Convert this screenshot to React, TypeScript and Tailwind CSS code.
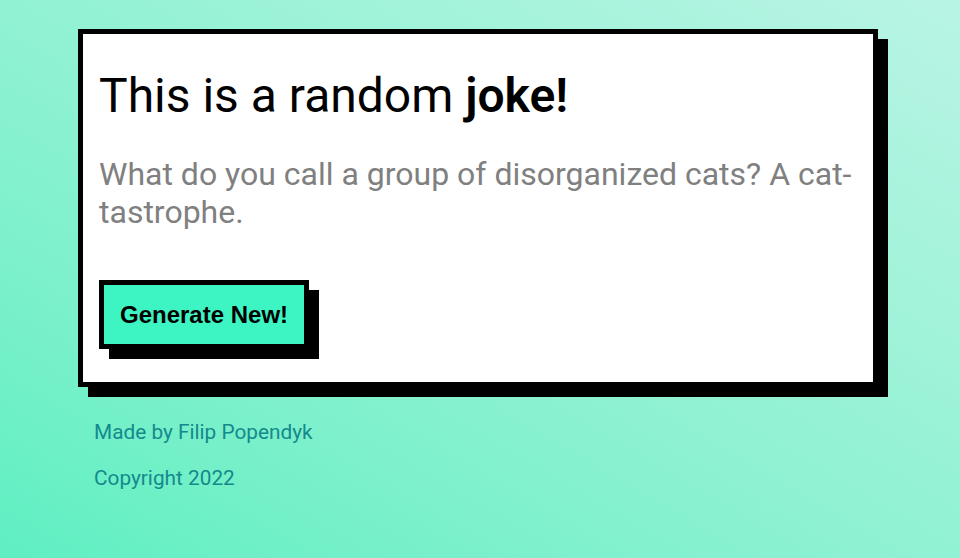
import React, { useState } from 'react';

const jokes = [
  'What do you call a group of disorganized cats? A cat-tastrophe.',
  'Why did the scarecrow win an award? Because he was outstanding in his field.',
  'What do you call a fake noodle? An impasta.',
];

export default function App() {
  const [index, setIndex] = useState(0);

  const nextJoke = () => setIndex((index + 1) % jokes.length);

  return (
    <main className="min-h-[558px] w-full bg-linear-to-tr from-[#5eefc2] to-[#b8f4e4] pl-[78px] pt-[29px] font-['Roboto',sans-serif]">
      <section className="w-[800px] border-[5px] border-black bg-white px-4 pb-[33px] pt-[34px] shadow-[10px_10px_0_0_#000]">
        <h1 className="text-[48px] leading-[56px] font-normal text-black">
          This is a random <b className="font-semibold">joke!</b>
        </h1>
        <p className="mt-[32px] text-[32px] leading-[37.5px] text-[#808080]">{jokes[index]}</p>
        <button
          onClick={nextJoke}
          className="mt-[49px] border-[5px] border-black bg-[#3cf5c3] px-4 py-4 font-['Liberation_Sans',Arial,sans-serif] text-[24px] leading-[27px] font-bold text-black shadow-[10px_10px_0_0_#000]"
        >
          Generate New!
        </button>
      </section>
      <footer className="pl-4 pt-[33px] text-[20.8px] leading-[25px] text-[#14898c]">
        <p>Made by Filip Popendyk</p>
        <p className="mt-[21px]">Copyright 2022</p>
      </footer>
    </main>
  );
}
